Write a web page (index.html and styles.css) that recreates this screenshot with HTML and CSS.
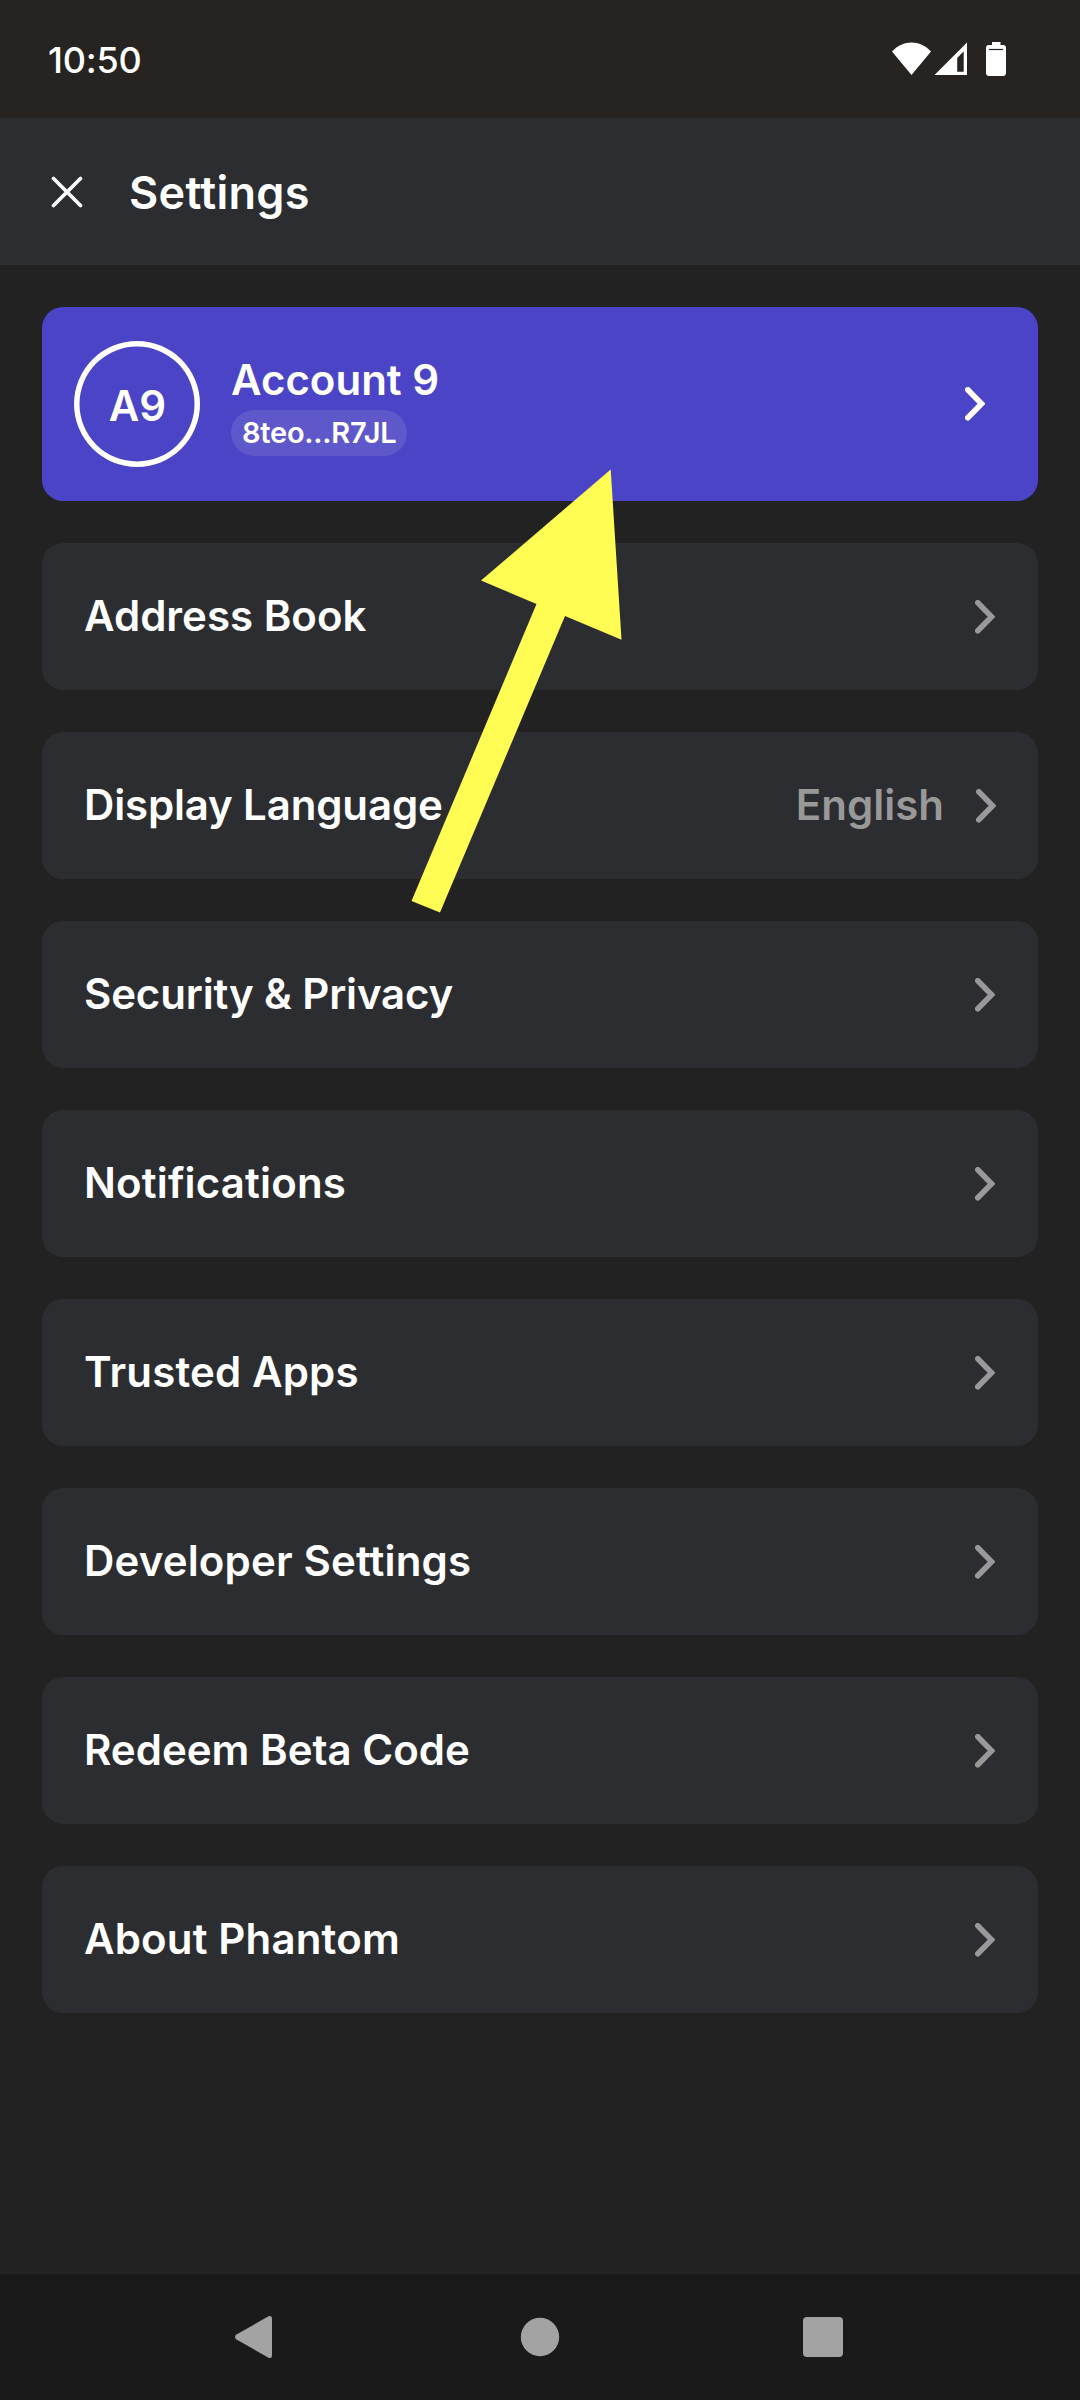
FILE: index.html
```html
<!DOCTYPE html>
<html lang="en">
<head>
<meta charset="utf-8">
<title>Settings</title>
<link rel="stylesheet" href="styles.css">
</head>
<body>
<svg class="defs" aria-hidden="true">
  <symbol id="chevron" viewBox="0 0 20 34"><path d="M2.8 2.8 16.6 16.800 2.8 30.8"/></symbol>
</svg>
<div class="screen">
  <div class="status-bar">
    <span class="time">10:50</span>
    <svg class="status-icons" width="116" height="36" viewBox="0 0 116 36">
      <path d="M0 9.500C5.500 3.500 12.500 .500 19.500 .500s14 3 19.500 9L19.500 33z"/>
      <path fill-rule="evenodd" d="M42.500 33 75 .5V33zM65.200 16v13.800h6.500V9.300z"/>
      <path d="M100 0h8.500v3h2.500a3 3 0 0 1 3 3v25a3 3 0 0 1-3 3H97a3 3 0 0 1-3-3V6a3 3 0 0 1 3-3h3z"/>
      <path class="battery-level" d="M97 7.500h14"/>
    </svg>
  </div>
  <header class="header">
    <svg class="close" width="32" height="32" viewBox="0 0 32 32"><path d="M2.500 2.500l27 27M29.500 2.500l-27 27"/></svg>
    <h1 class="title">Settings</h1>
  </header>
  <main class="content">
    <div class="account">
      <div class="avatar">A9</div>
      <div class="account-info">
        <div class="account-name">Account 9</div>
        <div class="address">8teo...R7JL</div>
      </div>
      <svg class="chevron"><use href="#chevron"/></svg>
    </div>
    <div class="row"><span class="label">Address Book</span><svg class="chevron"><use href="#chevron"/></svg></div>
    <div class="row row-value"><span class="label tight">Display Language</span><span class="value">English</span><svg class="chevron"><use href="#chevron"/></svg></div>
    <div class="row"><span class="label tight">Security &amp; Privacy</span><svg class="chevron"><use href="#chevron"/></svg></div>
    <div class="row"><span class="label wide">Notifications</span><svg class="chevron"><use href="#chevron"/></svg></div>
    <div class="row"><span class="label wide">Trusted Apps</span><svg class="chevron"><use href="#chevron"/></svg></div>
    <div class="row"><span class="label wide">Developer Settings</span><svg class="chevron"><use href="#chevron"/></svg></div>
    <div class="row"><span class="label">Redeem Beta Code</span><svg class="chevron"><use href="#chevron"/></svg></div>
    <div class="row"><span class="label wide">About Phantom</span><svg class="chevron"><use href="#chevron"/></svg></div>
  </main>
  <nav class="nav-bar">
    <svg width="44" height="44" viewBox="0 0 44 44"><path d="M4 19.800 36.500 1.300Q40 0 40 3.500v37Q40 44 36.500 42.700L4 24.200Q2 22 4 19.800z"/></svg>
    <svg class="home" width="44" height="44" viewBox="0 0 44 44"><circle cx="22" cy="22" r="19.200"/></svg>
    <svg width="44" height="44" viewBox="0 0 44 44"><rect x="2" y="2" width="40" height="40" rx="4"/></svg>
  </nav>
  <svg class="arrow" width="212" height="446" viewBox="0 0 212 446"><path d="M200.700 1.500 211.500 171.700 155 148 30 444.500 1.500 433 126.500 136 71 112.500z"/></svg>
</div>
</body>
</html>
```
FILE: styles.css
```css
* { box-sizing: border-box; }
body { margin: 0; background: #222; }
.defs { display: none; }
.screen {
  position: relative;
  display: flex;
  flex-direction: column;
  width: 1080px;
  height: 2400px;
  background: #222;
  color: #fff;
  font-family: Inter, "Liberation Sans", sans-serif;
  font-weight: 600;
}
.status-bar {
  display: flex;
  align-items: center;
  justify-content: space-between;
  height: 118px;
  padding: 2px 72px 0 48px;
  background: #272320;
}
.time { font-size: 36px; font-weight: 500; letter-spacing: -0.2px; }
.status-icons { fill: #fff; }
.battery-level { stroke: #272320; stroke-width: 1.200; }
.header {
  display: flex;
  align-items: center;
  height: 147px;
  padding: 0 51px;
  gap: 46px;
  background: #2c2d30;
}
.close { fill: none; stroke: #fff; stroke-width: 3.700; stroke-linecap: round; }
.title { margin: 0; padding-top: 2px; font-size: 45px; font-weight: 600; letter-spacing: 0.3px; }
.content {
  flex: 1;
  display: flex;
  flex-direction: column;
  gap: 42px;
  padding: 42px;
}
.account {
  display: flex;
  align-items: center;
  height: 194px;
  padding: 0 53px 0 32px;
  border-radius: 21px;
  background: #4b44c6;
}
.avatar {
  display: flex;
  align-items: center;
  justify-content: center;
  width: 126px;
  height: 126px;
  padding: 2px 0 0 1px;
  box-shadow: inset 0 0 0 5.5px #fff;
  border-radius: 50%;
  font-size: 42px;
}
.account-info {
  flex: 1;
  display: flex;
  flex-direction: column;
  align-items: flex-start;
  gap: 3px;
  margin-left: 31px;
}
.account-name { font-size: 42px; line-height: 54px; }
.address {
  height: 46px;
  padding: 0 11px;
  border-radius: 23px;
  background: #5f58cb;
  font-size: 29px;
  line-height: 46px;
  letter-spacing: -0.25px;
}
.chevron {
  width: 20px;
  height: 34px;
  fill: none;
  stroke: #fff;
  stroke-width: 5.600;
  stroke-linecap: round;
}
.row {
  display: flex;
  align-items: center;
  height: 147px;
  padding: 0 43px 0 42px;
  border-radius: 21px;
  background: #2c2d30;
  font-size: 42px;
}
.row .chevron { stroke: #999; }
.row-value { padding-right: 42px; }
.label, .value { padding-bottom: 2px; }
.label { flex: 1; }
.tight { letter-spacing: -0.15px; }
.wide { letter-spacing: 0.15px; }
.value { margin-right: 32px; color: #999; }
.nav-bar {
  display: flex;
  align-items: center;
  justify-content: space-between;
  height: 126px;
  padding: 0 235px 0 232px;
  background: #1a1a1a;
  fill: #a3a3a3;
}
.home { margin-left: 3px; }
.arrow {
  position: absolute;
  left: 410px;
  top: 468px;
  fill: #fffd54;
}
```
